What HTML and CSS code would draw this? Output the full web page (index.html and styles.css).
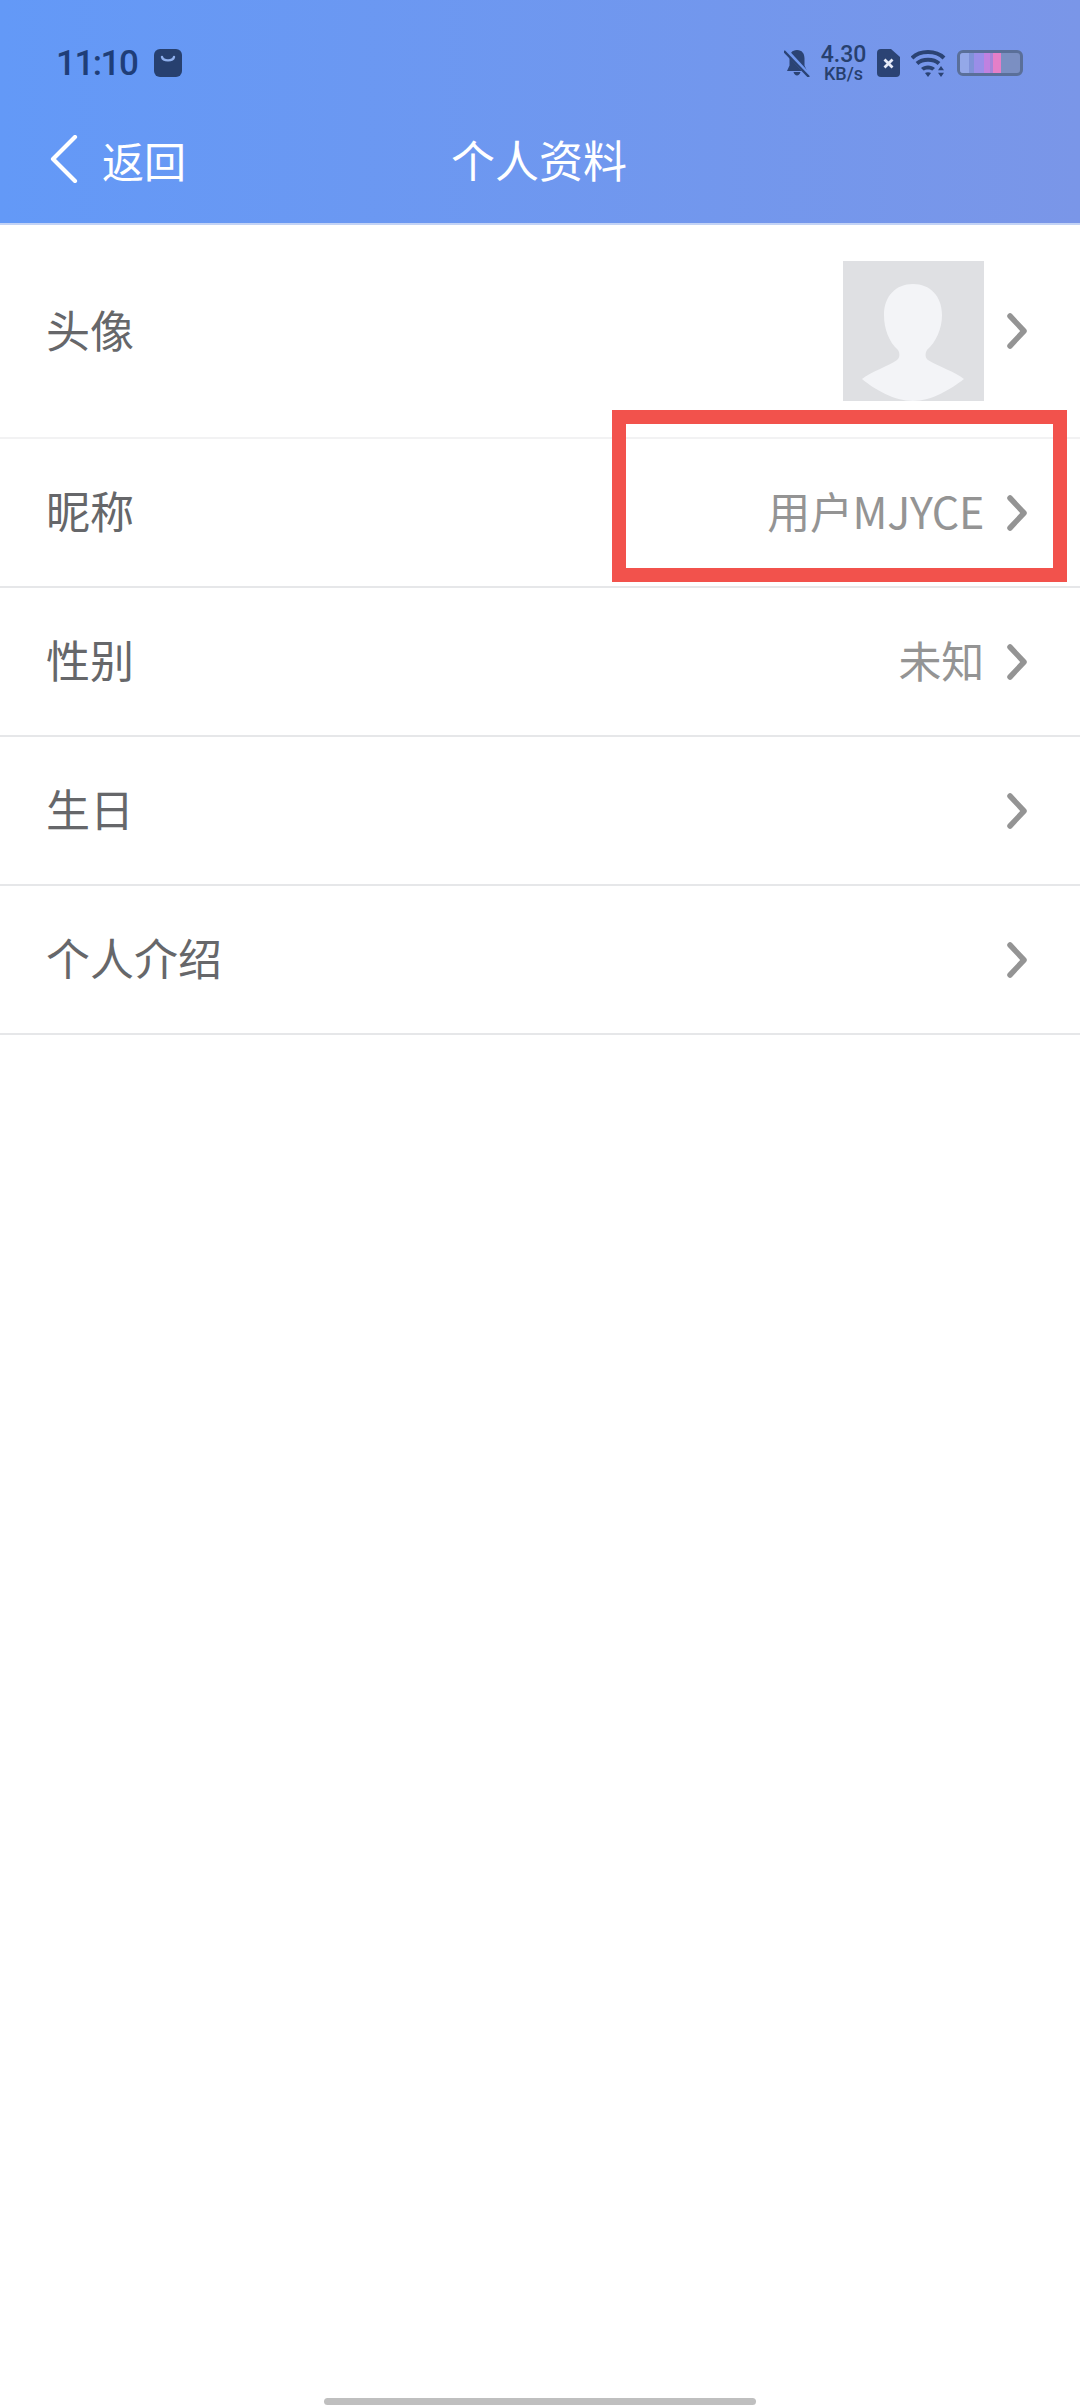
FILE: index.html
```html
<!DOCTYPE html>
<html lang="zh-CN">

<head>
	<meta charset="utf-8">
	<title>个人资料</title>
	<link rel="stylesheet" href="styles.css">
</head>

<body>
	<div id="phone">
		<header class="top">
			<div class="status">
				<div class="status-left">
					<span class="time">11:10</span>
					<svg class="shop" width="28" height="28" viewBox="0 0 28 28">
						<rect width="28" height="28" rx="6" fill="#27406f" />
						<path d="M8 8c1 4.500 11 4.500 12 0" fill="none" stroke="#8fb0ee" stroke-width="2.400" stroke-linecap="round" />
					</svg>
				</div>
				<div class="status-right">
					<svg class="bell" width="26" height="28" viewBox="0 0 26 28">
						<path d="M13 1C8 1 5.500 4.500 5.500 9.500v7L3 22h20l-2.500-5.500v-7C20.500 4.500 18 1 13 1zM9.500 23c.6 2 2 3.500 3.500 3.500s2.900-1.500 3.500-3.500z" fill="#2b4374" />
						<path d="M1.500 1l23 25" stroke="#7097ee" stroke-width="4.500" />
						<path d="M0 2l25 26" stroke="#2b4374" stroke-width="2.400" />
					</svg>
					<div class="speed"><span>4.30</span><span class="unit">KB/s</span></div>
					<svg class="sim" width="23" height="28" viewBox="0 0 23 28">
						<path d="M4 0h10l9 8v16a4 4 0 0 1-4 4H4a4 4 0 0 1-4-4V4a4 4 0 0 1 4-4z" fill="#2b4374" />
						<path d="M7.500 10.500l8 8M15.500 10.500l-8 8" stroke="#e6ebf8" stroke-width="2.800" />
					</svg>
					<svg class="wifi" width="35" height="27" viewBox="0 0 35 27">
						<g fill="none" stroke="#2b4374" stroke-width="4">
							<path d="M1 8c8-8 24-8 32 0" />
							<path d="M6 13.500c5.500-5 16.500-5 22 0" />
						</g>
						<path d="M10 18c3.500-3.400 10.500-3.400 14 0l-2.600 2.600c-2-1.500-6.800-1.500-8.800 0zM14 23c1.500-1 4.500-1 6 0l-3 4z" fill="#2b4374" />
						<path d="M30 16l3 4.200h-6zM30 27l-3-4.200h6z" fill="#2b4374" />
					</svg>
					<div class="battery">
						<span class="level"></span>
					</div>
				</div>
			</div>
			<div class="nav">
				<div class="back">
					<svg width="28" height="48" viewBox="0 0 28 48">
						<path d="M25 2L3 24l22 22" fill="none" stroke="#fff" stroke-width="4.200" stroke-linecap="round" stroke-linejoin="round" />
					</svg>
					<span>返回</span>
				</div>
				<div class="title">个人资料</div>
			</div>
		</header>

		<main class="list">
			<div class="row row-avatar">
				<span class="label">头像</span>
				<div class="right">
					<svg class="avatar" width="141" height="140" viewBox="0 0 141 140">
						<rect width="141" height="140" fill="#dfe0e3" />
						<path d="M70 23c-17 0-29 12-29 31 0 14 5 27 14 35 2 3 2 8-1 10-8 6-27 12-35 19 12 10 32 22 51 22s38-12 51-22c-8-7-27-13-36-19-3-2-3-7-1-10 9-8 15-21 15-35 0-19-12-31-29-31z" fill="#f3f4f7" />
					</svg>
					<svg class="chev" width="20" height="36" viewBox="0 0 20 36"><path d="M3 3l14 15L3 33" /></svg>
				</div>
			</div>
			<div class="row">
				<span class="label">昵称</span>
				<div class="right">
					<span class="value">用户MJYCE</span>
					<svg class="chev" width="20" height="36" viewBox="0 0 20 36"><path d="M3 3l14 15L3 33" /></svg>
				</div>
			</div>
			<div class="row">
				<span class="label">性别</span>
				<div class="right">
					<span class="value">未知</span>
					<svg class="chev" width="20" height="36" viewBox="0 0 20 36"><path d="M3 3l14 15L3 33" /></svg>
				</div>
			</div>
			<div class="row">
				<span class="label">生日</span>
				<div class="right">
					<svg class="chev" width="20" height="36" viewBox="0 0 20 36"><path d="M3 3l14 15L3 33" /></svg>
				</div>
			</div>
			<div class="row">
				<span class="label">个人介绍</span>
				<div class="right">
					<svg class="chev" width="20" height="36" viewBox="0 0 20 36"><path d="M3 3l14 15L3 33" /></svg>
				</div>
			</div>
		</main>

		<div class="mark"></div>
		<div class="home-bar"></div>
	</div>
</body>

</html>
```

FILE: styles.css
```css
:root {
	--ink: #66676a;
	--muted: #949494;
	--line: #e6e7e9;
	--status: #27406f;
}

* {
	box-sizing: border-box;
}

body {
	margin: 0;
	background-color: #fff;
	font-family: 'Noto Sans CJK SC', 'Noto Sans', sans-serif;
}

#phone {
	position: relative;
	display: flex;
	flex-direction: column;
	width: 1080px;
	height: 2408px;
	overflow: hidden;
}

.top {
	height: 225px;
	padding-top: 38px;
	background: linear-gradient(90deg, #6399f7 0%, #7a96e8 100%);
	border-bottom: 2px solid #c3d3f5;
}

.status {
	display: flex;
	justify-content: space-between;
	align-items: center;
	height: 50px;
	padding: 0 57px 0 56px;
}

.status-left,
.status-right {
	display: flex;
	align-items: center;
}

.time {
	font-family: 'Roboto', sans-serif;
	font-size: 35px;
	font-weight: 500;
	letter-spacing: -1.500px;
	color: #1f3e78;
}

.shop {
	margin-left: 17px;
}

.bell {
	margin-right: 11px;
}

.speed {
	display: flex;
	flex-direction: column;
	align-items: center;
	width: 45px;
	font-family: 'Roboto', sans-serif;
	font-size: 23px;
	font-weight: 500;
	line-height: 21px;
	color: var(--status);
}

.speed .unit {
	font-size: 18px;
	line-height: 17px;
}

.sim {
	margin-left: 11px;
}

.wifi {
	margin-left: 11px;
}

.battery {
	width: 66px;
	height: 26px;
	margin-left: 11px;
	border: 3px solid #5a6f99;
	border-radius: 6px;
	background-color: #7b8fc2;
	overflow: hidden;
}

.level {
	display: block;
	width: 41px;
	height: 100%;
	background: linear-gradient(90deg, #94a8e8 0 9px, #7f92d8 9px 14px, #9a8ee8 14px 24px, #c081e0 24px 30px, #a584d8 30px 33px, #e47fc8 33px 41px);
}

.nav {
	position: relative;
	display: flex;
	align-items: center;
	height: 84px;
	margin-top: 29px;
	color: #fff;
}

.back {
	display: flex;
	align-items: center;
	gap: 24px;
	padding-left: 50px;
	font-size: 42px;
}

.title {
	position: absolute;
	left: 0;
	right: 0;
	top: 0;
	line-height: 84px;
	text-align: center;
	font-size: 44px;
	padding-right: 2px;
}

.row {
	display: flex;
	justify-content: space-between;
	align-items: center;
	height: 149px;
	padding: 0 53px 0 46px;
	border-bottom: 2px solid var(--line);
}

.row-avatar {
	height: 214px;
	border-bottom-color: #f2f2f3;
}

.label {
	padding-bottom: 5px;
	font-size: 44px;
	color: var(--ink);
}

.right {
	display: flex;
	align-items: center;
}

.value {
	padding-bottom: 6px;
	font-size: 43px;
	letter-spacing: -0.300px;
	color: var(--muted);
}

.avatar {
	display: block;
}

.chev {
	margin-left: 23px;
}

.chev path {
	fill: none;
	stroke: #949494;
	stroke-width: 5.500;
	stroke-linecap: round;
	stroke-linejoin: round;
}

/* red annotation drawn over the nickname row */
.mark {
	position: absolute;
	left: 612px;
	top: 410px;
	width: 455px;
	height: 172px;
	border: 14px solid #f2524c;
}

.home-bar {
	position: absolute;
	left: 324px;
	top: 2398px;
	width: 432px;
	height: 7px;
	border-radius: 4px;
	background-color: #bfbfbf;
}
```
